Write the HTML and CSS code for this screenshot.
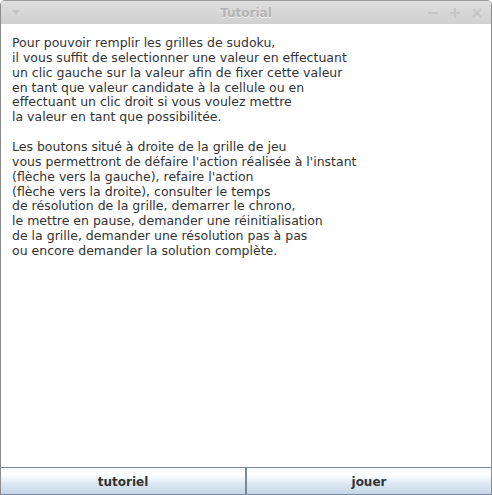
FILE: index.html
```html
<!DOCTYPE html>
<html>
<head>
<meta charset="utf-8">
<link rel="stylesheet" href="styles.css">
</head>
<body>
<div class="window">
  <div class="titlebar">
    <span class="menu-arrow"></span>
    <span class="title">Tutorial</span>
    <div class="controls">
      <svg width="10" height="10" viewBox="0 0 10 10"><rect x="0" y="4" width="10" height="2" fill="#c4c4c4"/></svg>
      <svg width="10" height="10" viewBox="0 0 10 10"><rect x="0" y="4" width="10" height="2" fill="#c4c4c4"/><rect x="4" y="0" width="2" height="10" fill="#c4c4c4"/></svg>
      <svg width="10" height="10" viewBox="0 0 10 10"><path d="M1 1 L9 9 M9 1 L1 9" stroke="#c4c4c4" stroke-width="2"/></svg>
    </div>
  </div>
  <div class="content">
    <p>Pour pouvoir remplir les grilles de sudoku,<br>il vous suffit de selectionner une valeur en effectuant<br>un clic gauche sur la valeur afin de fixer cette valeur<br>en tant que valeur candidate à la cellule ou en<br>effectuant un clic droit si vous voulez mettre<br>la valeur en tant que possibilitée.</p>
    <p>Les boutons situé à droite de la grille de jeu<br>vous permettront de défaire l'action réalisée à l'instant<br>(flèche vers la gauche), refaire l'action<br>(flèche vers la droite), consulter le temps<br>de résolution de la grille, demarrer le chrono,<br>le mettre en pause, demander une réinitialisation<br>de la grille, demander une résolution pas à pas<br>ou encore demander la solution complète.</p>
  </div>
  <div class="buttons">
    <button class="btn">tutoriel</button>
    <button class="btn">jouer</button>
  </div>
</div>
</body>
</html>
```
FILE: styles.css
```css
html, body { margin: 0; padding: 0; background: #ffffff; }
.window {
  width: 492px; height: 495px; box-sizing: border-box;
  display: flex; flex-direction: column;
  border-left: 1px solid #8c8c8c; border-right: 1px solid #8c8c8c;
  border-radius: 5px 5px 0 0;
  overflow: hidden;
  font-family: "DejaVu Sans", sans-serif;
}
.titlebar {
  height: 24px; flex: none; display: flex; align-items: center;
  background: linear-gradient(#dedede, #d0d0d0);
  border-top: 1px solid #9a9a9a;
  box-sizing: border-box;
  position: relative;
}
.menu-arrow {
  width: 0; height: 0; margin-left: 11px;
  border-left: 4px solid transparent; border-right: 4px solid transparent;
  border-top: 5px solid #c0c0c0;
}
.title {
  position: absolute; left: 0; right: 0; text-align: center;
  font-weight: bold; font-size: 12px; color: #b3b3b3;
  text-shadow: 0 1px 0 #f0f0f0;
}
.controls { margin-left: auto; display: flex; gap: 12px; margin-right: 9px; }
.content {
  flex: 1; padding: 12px 0 0 11px; box-sizing: border-box;
  font-size: 12.5px; line-height: 14.86px; color: #333333;
}
.content p { margin: 0 0 14.86px 0; }
.buttons {
  flex: none; display: flex; height: 28px; box-sizing: border-box;
  border-top: 1px solid #7a8a9a; border-bottom: 1px solid #7a8a9a;
  background: #7a8a9a; gap: 2px;
}
.btn {
  flex: 1; border: none; margin: 0; padding: 2px 0 0 0;
  background: linear-gradient(#f4f8fc 0%, #ffffff 25%, #dde8f3 60%, #c4d6e8 100%);
  font-family: "DejaVu Sans", sans-serif; font-weight: bold; font-size: 12px; color: #333333;
}
```
